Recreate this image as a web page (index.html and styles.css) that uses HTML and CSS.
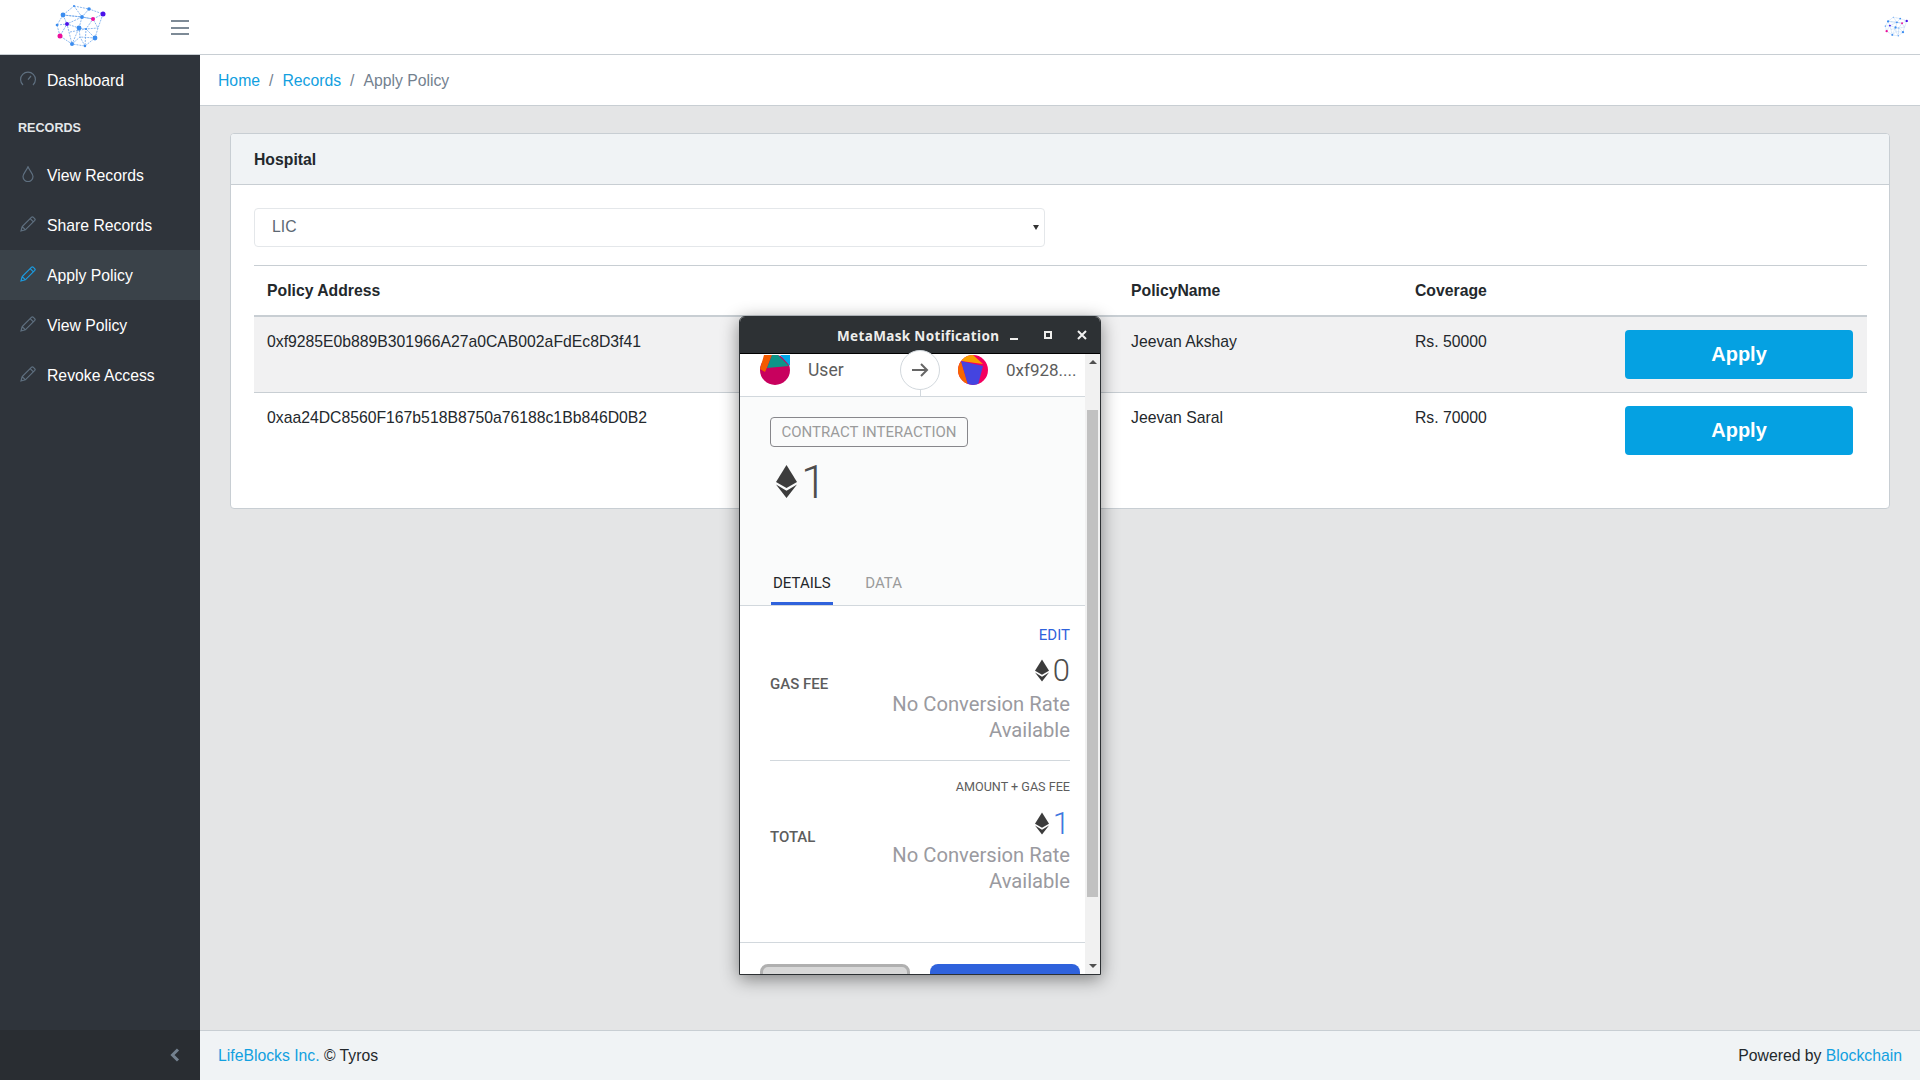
FILE: index.html
```html
<!DOCTYPE html>
<html lang="en">
<head>
    <meta charset="UTF-8">
    <title>LifeBlocks - Apply Policy</title>
    <link rel="stylesheet" href="styles.css">
</head>
<body>
    <svg class="sprites" width="0" height="0">
        <symbol id="net" viewBox="0 0 60 46">
            <g fill="none" stroke="#5b9be8" stroke-width="0.7" stroke-dasharray="2 1">
                <path d="M24 2 L39 5 L53 10 L43 15 L32 13 L13 11 L24 2"/>
                <path d="M13 11 L7 21 L10 32 L22 40 L35 42 L45 34 L48 24 L43 15"/>
                <path d="M13 11 L17 20 L29 24 L36 25 L45 34 L30 33 L22 40"/>
                <path d="M7 21 L17 20 L32 13 L29 24 L22 40 L17 20 L10 32"/>
                <path d="M39 5 L32 13 L43 15 L36 25 L35 42 L30 33 L29 24"/>
                <path d="M24 2 L32 13 M53 10 L48 24 M13 11 L32 13 M20 28 L36 25 L48 24"/>
            </g>
            <g fill="#3b8df0">
                <circle cx="13" cy="11" r="2.4"/>
                <circle cx="39" cy="5" r="1.8"/>
                <circle cx="32" cy="13" r="1.9"/>
                <circle cx="29" cy="24" r="2.4"/>
                <circle cx="7" cy="21" r="1.3"/>
                <circle cx="22" cy="40" r="2"/>
                <circle cx="45" cy="34" r="2.4"/>
                <circle cx="35" cy="42" r="1.2"/>
                <circle cx="36" cy="25" r="1"/>
                <circle cx="24" cy="2" r="1"/>
            </g>
            <g fill="#4a12ea">
                <circle cx="53" cy="10" r="2.5"/>
                <circle cx="17" cy="20" r="2"/>
            </g>
            <g fill="#ec0f9b">
                <circle cx="43" cy="15" r="2"/>
                <circle cx="10" cy="32" r="2.5"/>
            </g>
        </symbol>
        <symbol id="pencil" viewBox="0 0 16 16">
            <path d="M1 15 L2.2 10.6 L11.6 1.2 Q12.4 0.5 13.2 1.2 L14.8 2.8 Q15.5 3.6 14.8 4.4 L5.4 13.8 Z M2.2 10.6 L5.4 13.8 M10.2 2.6 L13.4 5.8" fill="none" stroke="currentColor" stroke-width="1.2"/>
        </symbol>
        <symbol id="eth" viewBox="0 0 21 33">
            <polygon points="10.5,0 21,17 10.5,23 0,17" fill="#3c3c3c"/>
            <polygon points="0,19.6 10.5,25.8 21,19.6 10.5,33" fill="#3c3c3c"/>
        </symbol>
    </svg>

    <div class="app">
        <header class="topbar">
            <div class="brand">
                <svg class="brand-logo"><use href="#net"/></svg>
            </div>
            <button class="toggler"><span></span><span></span><span></span></button>
            <svg class="avatar"><use href="#net"/></svg>
        </header>

        <div class="app-body">
            <aside class="sidebar">
                <nav class="nav">
                    <a class="nav-link">
                        <svg class="nav-icon" viewBox="0 0 16 16"><path d="M3 14 A7.4 7.4 0 1 1 13 14 M8 8.6 L11 5" fill="none" stroke="currentColor" stroke-width="1.2"/></svg>
                        Dashboard
                    </a>
                    <div class="nav-title">Records</div>
                    <a class="nav-link">
                        <svg class="nav-icon" viewBox="0 0 16 16"><path d="M8 0.8 C6.2 5 3 7.6 3 10.6 A5 5 0 0 0 13 10.6 C13 7.6 9.8 5 8 0.8 Z" fill="none" stroke="currentColor" stroke-width="1.2"/></svg>
                        View Records
                    </a>
                    <a class="nav-link">
                        <svg class="nav-icon"><use href="#pencil"/></svg>
                        Share Records
                    </a>
                    <a class="nav-link active">
                        <svg class="nav-icon"><use href="#pencil"/></svg>
                        Apply Policy
                    </a>
                    <a class="nav-link">
                        <svg class="nav-icon"><use href="#pencil"/></svg>
                        View Policy
                    </a>
                    <a class="nav-link">
                        <svg class="nav-icon"><use href="#pencil"/></svg>
                        Revoke Access
                    </a>
                </nav>
                <div class="minimizer">
                    <svg width="10" height="14" viewBox="0 0 10 14"><path d="M8 1.5 L2.5 7 L8 12.5" fill="none" stroke="#73818f" stroke-width="3"/></svg>
                </div>
            </aside>

            <div class="main">
                <ol class="breadcrumb">
                    <li><a href="#">Home</a></li>
                    <li class="sep">/</li>
                    <li><a href="#">Records</a></li>
                    <li class="sep">/</li>
                    <li class="current">Apply Policy</li>
                </ol>

                <main class="content">
                    <section class="card">
                        <div class="card-header">Hospital</div>
                        <div class="card-body">
                            <div class="select-wrap">
                                <select class="form-select">
                                    <option>LIC</option>
                                </select>
                            </div>
                            <table class="table">
                                <thead>
                                    <tr>
                                        <th class="col-address">Policy Address</th>
                                        <th class="col-name">PolicyName</th>
                                        <th class="col-coverage">Coverage</th>
                                        <th></th>
                                    </tr>
                                </thead>
                                <tbody>
                                    <tr class="hovered">
                                        <td>0xf9285E0b889B301966A27a0CAB002aFdEc8D3f41</td>
                                        <td>Jeevan Akshay</td>
                                        <td>Rs. 50000</td>
                                        <td class="col-action"><button class="btn-apply">Apply</button></td>
                                    </tr>
                                    <tr>
                                        <td>0xaa24DC8560F167b518B8750a76188c1Bb846D0B2</td>
                                        <td>Jeevan Saral</td>
                                        <td>Rs. 70000</td>
                                        <td class="col-action"><button class="btn-apply">Apply</button></td>
                                    </tr>
                                </tbody>
                            </table>
                        </div>
                    </section>
                </main>

                <footer class="footer">
                    <div><a href="#">LifeBlocks Inc.</a> © Tyros</div>
                    <div>Powered by <a href="#">Blockchain</a></div>
                </footer>
            </div>
        </div>
    </div>

    <div class="mm-window">
        <div class="mm-titlebar">
            <span class="mm-title">MetaMask Notification</span>
            <span class="mm-min"></span>
            <span class="mm-max"></span>
            <svg class="mm-close" width="10" height="10" viewBox="0 0 10 10"><path d="M1 1 L9 9 M9 1 L1 9" stroke="#f2f2f2" stroke-width="2"/></svg>
        </div>
        <div class="mm-view">
            <div class="mm-page">
                <div class="mm-parties">
                    <svg class="identicon" viewBox="0 0 30 30">
                        <circle cx="15" cy="15" r="15" fill="#c8015e"/>
                        <polygon points="0,14 5,17 7,12.5 12,0 4,0" fill="#f35a00"/>
                        <polygon points="12,0 18,0 29,11 7,13" fill="#0e9488"/>
                        <polygon points="20,0 30,0 30,11" fill="#00a8e8"/>
                    </svg>
                    <span class="mm-party-name first">User</span>
                    <span class="mm-arrow">
                        <svg width="18" height="16" viewBox="0 0 18 16"><path d="M1 8 H16 M10 2 L16 8 L10 14" fill="none" stroke="#666" stroke-width="2"/></svg>
                    </span>
                    <svg class="identicon" viewBox="0 0 30 30">
                        <clipPath id="disc"><circle cx="15" cy="15" r="15"/></clipPath>
                        <g clip-path="url(#disc)">
                            <rect width="30" height="30" fill="#f4005f"/>
                            <polygon points="0,4 3,6 10,30 0,30" fill="#f76700"/>
                            <polygon points="5,0 15,0 25,9 3,6" fill="#f9a000"/>
                            <polygon points="3,6 25,11 20,30 10,30" fill="#4444e0"/>
                        </g>
                    </svg>
                    <span class="mm-party-name">0xf928....</span>
                </div>

                <div class="mm-summary">
                    <span class="mm-badge">Contract Interaction</span>
                    <div class="mm-amount">
                        <svg class="eth-big"><use href="#eth"/></svg>
                        <span class="mm-amount-value">1</span>
                    </div>
                </div>

                <div class="mm-tabs">
                    <span class="mm-tab active">Details</span>
                    <span class="mm-tab">Data</span>
                </div>

                <div class="mm-details">
                    <div class="mm-row">
                        <div class="mm-row-label">Gas Fee</div>
                        <div class="mm-row-value">
                            <div class="mm-heading">Edit</div>
                            <div class="mm-eth"><svg class="eth-small"><use href="#eth"/></svg><span>0</span></div>
                            <div class="mm-fiat">No Conversion Rate Available</div>
                        </div>
                    </div>
                    <div class="mm-row mm-row-total">
                        <div class="mm-row-label">Total</div>
                        <div class="mm-row-value">
                            <div class="mm-heading small">Amount + Gas Fee</div>
                            <div class="mm-eth blue"><svg class="eth-small"><use href="#eth"/></svg><span>1</span></div>
                            <div class="mm-fiat">No Conversion Rate Available</div>
                        </div>
                    </div>
                </div>

                <div class="mm-actions">
                    <span class="mm-btn cancel"></span>
                    <span class="mm-btn confirm"></span>
                </div>
            </div>
            <div class="mm-scrollbar">
                <span class="arrow-up"></span>
                <span class="mm-thumb"></span>
                <span class="arrow-down"></span>
            </div>
        </div>
    </div>
</body>
</html>
```

FILE: styles.css
```css
* {
    margin: 0;
    padding: 0;
    box-sizing: border-box;
}

body {
    font-family: "Liberation Sans", Arial, sans-serif;
    font-size: 15.75px;
    background: #e4e5e6;
    color: #23282c;
    height: 100vh;
    overflow: hidden;
}

a {
    color: #12a0e0;
    text-decoration: none;
}

.sprites {
    position: absolute;
}

.app {
    display: flex;
    flex-direction: column;
    height: 100vh;
}

.topbar {
    height: 55px;
    flex-shrink: 0;
    background: #fff;
    border-bottom: 1px solid #c8ced3;
    display: flex;
    align-items: center;
}

.brand {
    width: 155px;
    padding-left: 50px;
    display: flex;
}

.brand-logo {
    width: 60px;
    height: 46px;
}

.toggler {
    width: 18px;
    margin-left: 16px;
    margin-top: 1px;
    background: none;
    border: none;
    display: flex;
    flex-direction: column;
    gap: 4.5px;
}

.toggler span {
    height: 2px;
    background: #7d8a96;
}

.avatar {
    width: 28px;
    height: 26px;
    margin-left: auto;
    margin-right: 10px;
}

.app-body {
    flex: 1;
    display: flex;
    min-height: 0;
}

.sidebar {
    width: 200px;
    flex-shrink: 0;
    background: #2f343b;
    color: #fff;
    display: flex;
    flex-direction: column;
    justify-content: space-between;
}

.nav-link {
    height: 50px;
    padding: 2px 0 0 20px;
    display: flex;
    align-items: center;
    gap: 11px;
    color: #fff;
}

.nav-link.active {
    background: #3a4249;
}

.nav-icon {
    width: 16px;
    height: 16px;
    margin-top: -5px;
    color: #5f7080;
}

.nav-link.active .nav-icon {
    color: #1b9be0;
}

.nav-title {
    height: 45px;
    padding: 16px 0 0 18px;
    font-size: 12.6px;
    font-weight: bold;
    text-transform: uppercase;
    color: #e4e7ea;
}

.minimizer {
    height: 50px;
    background: #292d32;
    display: flex;
    align-items: center;
    justify-content: flex-end;
    padding-right: 20px;
}

.main {
    flex: 1;
    min-width: 0;
    display: flex;
    flex-direction: column;
}

.breadcrumb {
    height: 51px;
    flex-shrink: 0;
    background: #fff;
    border-bottom: 1px solid #c8ced3;
    list-style: none;
    display: flex;
    align-items: center;
    gap: 9px;
    padding: 2px 0 0 18px;
}

.breadcrumb .sep,
.breadcrumb .current {
    color: #73818f;
}

.content {
    flex: 1;
    padding: 27px 30px 0;
}

.card {
    background: #fff;
    border: 1px solid #c8ced3;
    border-radius: 4px;
    height: 376px;
}

.card-header {
    height: 51px;
    padding: 2px 23px 0;
    display: flex;
    align-items: center;
    background: #f0f3f5;
    border-bottom: 1px solid #c8ced3;
    border-radius: 3px 3px 0 0;
    font-weight: bold;
}

.card-body {
    padding: 23px 22px 23px 23px;
}

.select-wrap {
    position: relative;
    width: 791px;
    margin-bottom: 18px;
}

.select-wrap::after {
    content: "";
    position: absolute;
    right: 6px;
    top: 17px;
    border: 3.5px solid transparent;
    border-top: 5px solid #333;
    border-bottom: 0;
}

.form-select {
    display: block;
    width: 100%;
    height: 39px;
    padding: 0 17px 2px;
    appearance: none;
    background: #fff;
    border: 1px solid #e4e7ea;
    border-radius: 4px;
    color: #5c6873;
    font-family: inherit;
    font-size: 15.75px;
}

.table {
    width: 100%;
    table-layout: fixed;
    border-collapse: collapse;
}

.table th {
    height: 50px;
    padding: 2px 13px 0;
    text-align: left;
    border-top: 1px solid #c8ced3;
    border-bottom: 2px solid #c8ced3;
}

.table td {
    height: 76px;
    padding: 16px 13px 13px;
    vertical-align: top;
}

.table .hovered td {
    height: 77px;
}

.table tbody tr + tr td {
    border-top: 1px solid #c8ced3;
}

.table .hovered {
    background: #f1f1f2;
}

.col-address {
    width: 864px;
}

.col-name {
    width: 284px;
}

.col-coverage {
    width: 220px;
}

.table .col-action {
    padding: 13px 14px 0 0;
    text-align: right;
}

.btn-apply {
    width: 228px;
    height: 49px;
    background: #05a1e2;
    border: none;
    border-radius: 4px;
    color: #fff;
    font-family: inherit;
    font-size: 20px;
    font-weight: bold;
}

.footer {
    height: 50px;
    flex-shrink: 0;
    background: #f0f3f5;
    border-top: 1px solid #c8ced3;
    padding: 0 18px;
    display: flex;
    align-items: center;
    justify-content: space-between;
}

/* metamask popup, floats over the page */
.mm-window {
    position: absolute;
    left: 739px;
    top: 316px;
    width: 362px;
    height: 659px;
    display: flex;
    flex-direction: column;
    border: 1px solid #2c3033;
    border-radius: 6px 6px 0 0;
    background: #fff;
    box-shadow: 0 4px 18px rgba(0, 0, 0, 0.45);
    overflow: hidden;
    font-family: Roboto, sans-serif;
}

.mm-titlebar {
    height: 37px;
    flex-shrink: 0;
    background: #2d3134;
    color: #eeeeec;
    display: flex;
    align-items: center;
    padding-left: 97px;
    border-bottom: 1px solid #000;
}

.mm-title {
    width: 162px;
    padding-top: 1px;
    font-family: "Noto Sans", sans-serif;
    font-size: 13.5px;
    font-weight: 700;
    letter-spacing: 0.35px;
    white-space: nowrap;
}

.mm-min {
    width: 8px;
    height: 2px;
    margin: 7px 0 0 11px;
    background: #eeeeec;
}

.mm-max {
    width: 8px;
    height: 8px;
    margin-left: 26px;
    border: 2px solid #eeeeec;
}

.mm-close {
    margin-left: 25px;
}

.mm-view {
    flex: 1;
    display: flex;
    min-height: 0;
}

.mm-page {
    flex: 1;
    min-width: 0;
    display: flex;
    flex-direction: column;
}

.mm-parties {
    height: 43px;
    flex-shrink: 0;
    display: flex;
    align-items: center;
    padding: 0 0 11px 20px;
    border-bottom: 1px solid #d2d8dd;
    position: relative;
    font-size: 17px;
    color: #5d5d5d;
}

.identicon {
    width: 30px;
    height: 30px;
    flex-shrink: 0;
}

.mm-party-name {
    margin-left: 18px;
    white-space: nowrap;
}

.mm-party-name.first {
    width: 92px;
    font-size: 17.5px;
}

.mm-arrow {
    width: 40px;
    height: 40px;
    flex-shrink: 0;
    margin-right: 18px;
    border: 1px solid #d2d8dd;
    border-radius: 50%;
    background: #fff;
    display: flex;
    align-items: center;
    justify-content: center;
}

.mm-arrow::after {
    content: "";
    position: absolute;
    left: 180px;
    top: 36px;
    width: 1px;
    height: 6px;
    background: #d2d8dd;
}

.mm-summary {
    height: 169px;
    flex-shrink: 0;
    background: #fafbfb;
    padding: 20px 30px;
}

.mm-badge {
    display: inline-block;
    height: 30px;
    padding: 0 10.5px;
    line-height: 28px;
    border: 1px solid #87878b;
    border-radius: 4px;
    font-size: 15px;
    text-transform: uppercase;
    color: #9b9b9b;
}

.mm-amount {
    display: flex;
    align-items: center;
    margin: 16px 0 0 6px;
    gap: 4px;
    height: 36px;
    font-size: 46px;
    font-weight: 300;
    color: #4d4d4d;
}

.mm-amount-value {
    padding-top: 2px;
}

.eth-big {
    width: 21px;
    height: 33px;
}

.mm-tabs {
    height: 40px;
    flex-shrink: 0;
    display: flex;
    gap: 29.5px;
    padding-left: 30.5px;
    background: #fafbfb;
    border-bottom: 1px solid #d2d8dd;
}

.mm-tab {
    padding: 8px 2.5px 0;
    text-align: center;
    font-size: 15px;
    text-transform: uppercase;
    color: #9b9b9b;
}

.mm-tab.active {
    color: #24272a;
    border-bottom: 3px solid #2f62dc;
}

.mm-details {
    height: 337px;
    flex-shrink: 0;
    padding: 0 15px 0 30px;
    border-bottom: 1px solid #d2d8dd;
}

.mm-row {
    display: flex;
    align-items: center;
    justify-content: space-between;
    height: 154px;
    padding-top: 2px;
}

.mm-row-total {
    height: 165px;
    padding: 0 0 13px;
    border-top: 1px solid #d2d8dd;
}

.mm-row-label {
    font-size: 15px;
    font-weight: 500;
    text-transform: uppercase;
    color: #5d5d5d;
}

.mm-row-value {
    width: 180px;
    text-align: right;
}

.mm-heading {
    font-size: 15px;
    text-transform: uppercase;
    color: #2f62dc;
}

.mm-heading.small {
    font-size: 12.6px;
    color: #5d5d5d;
    white-space: nowrap;
}

.mm-eth {
    display: flex;
    align-items: center;
    justify-content: flex-end;
    gap: 4px;
    height: 30px;
    margin: 12px 0 5px;
    font-size: 31px;
    font-weight: 300;
    color: #4d4d4d;
}

.mm-eth.blue {
    margin: 14px 0 4px;
    color: #3f78e0;
}

.eth-small {
    width: 14px;
    height: 23px;
}

.mm-fiat {
    font-size: 20.2px;
    line-height: 26px;
    color: #9a9aa0;
}

.mm-actions {
    flex: 1;
    display: flex;
    gap: 20px;
    padding: 21px 0 0 20px;
}

.mm-btn {
    width: 150px;
    height: 40px;
    border-radius: 8px;
}

.mm-btn.cancel {
    background: #d8d8d8;
    border: 3px solid #b0b0b0;
}

.mm-btn.confirm {
    background: #2f62dc;
}

.mm-scrollbar {
    width: 15px;
    flex-shrink: 0;
    background: #f1f1f1;
    display: flex;
    flex-direction: column;
    align-items: center;
    justify-content: space-between;
    padding: 6px 0;
}

.arrow-up {
    border: 4px solid transparent;
    border-top: 0;
    border-bottom: 4px solid #505050;
}

.arrow-down {
    border: 4px solid transparent;
    border-bottom: 0;
    border-top: 4px solid #505050;
}

.mm-thumb {
    width: 11px;
    height: 487px;
    margin-bottom: 22px;
    background: #c1c1c1;
}
```
